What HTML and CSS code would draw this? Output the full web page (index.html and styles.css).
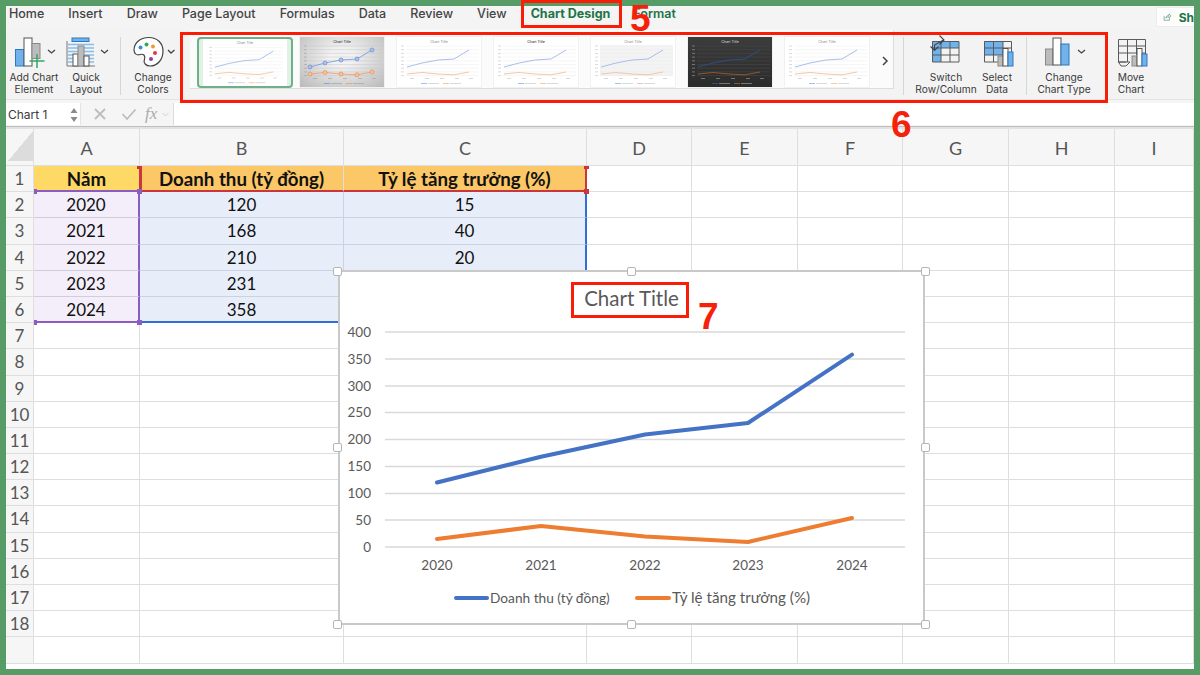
FILE: index.html
```html
<!DOCTYPE html>
<html lang="vi">
<head>
<meta charset="utf-8">
<title>Chart Design</title>
<link rel="stylesheet" href="styles.css">
</head>
<body>
<svg class="defs" width="0" height="0" aria-hidden="true">
  <symbol id="thumb" viewBox="0 0 84 50">
    <g class="t-grid">
      <path d="M9 9H82M9 12.7H82M9 16.4H82M9 20.1H82M9 23.8H82M9 27.5H82M9 31.2H82M9 34.9H82M9 38.6H82"/>
    </g>
    <path class="t-ticks" d="M4 9H7M4 12.7H7M4 16.4H7M4 20.1H7M4 23.8H7M4 27.5H7M4 31.2H7M4 34.9H7M4 38.6H7M13 41.5H17M28 41.5H32M43 41.5H47M58 41.5H62M72 41.5H76M31 46.5H42M53 46.5H64"/>
    <polyline class="t-blue" points="10,30 25,26 41,23 57,22 72,13"/>
    <polyline class="t-orange" points="10,37 25,35.5 41,37 57,37.8 72,35"/>
    <path class="t-blue" d="M24 46.5H30"/>
    <path class="t-orange" d="M46 46.5H52"/>
  </symbol>
</svg>

<div class="page">
  <div class="app">
    <nav class="tabs">
      <span class="tab">Home</span>
      <span class="tab">Insert</span>
      <span class="tab">Draw</span>
      <span class="tab">Page Layout</span>
      <span class="tab">Formulas</span>
      <span class="tab">Data</span>
      <span class="tab">Review</span>
      <span class="tab">View</span>
      <span class="tab tab-active">Chart Design</span>
      <span class="tab tab-format">Format</span>
      <span class="share">
        <svg width="16" height="14" viewBox="0 0 16 14"><path class="share-ic" d="M2 5V13H12V9M5 9C6 5 9 4 11 4V1.500L15 5L11 8.500V6.500C9 6.500 7 7 5 9Z"/></svg>
        <b>Sh</b>
      </span>
    </nav>

    <section class="ribbon">
      <div class="btn b-add">
        <svg class="ic" width="56" height="34" viewBox="6 34 56 34">
          <rect class="bar-blue" x="15.500" y="49.500" width="8.500" height="16.500"/>
          <rect class="bar-white" x="24" y="38" width="8" height="28"/>
          <rect class="bar-grey" x="32" y="43.500" width="8" height="15"/>
          <path class="plus" d="M37 54V68M29.500 61H44.500"/>
          <path class="chev" d="M48 50L51.500 53L55 50"/>
        </svg>
        <span class="lbl">Add Chart<br>Element</span>
      </div>
      <div class="btn b-quick">
        <svg class="ic" width="48" height="34" viewBox="62 34 48 34">
          <path class="stripes" d="M68 44.500H94M68 48H94M68 51.500H94M68 55H94M68 58.500H94M68 62H94"/>
          <path class="axis" d="M67 41V66H95"/>
          <rect class="bar-blue" x="72" y="38" width="17" height="3.500"/>
          <rect class="bar-white" x="73" y="54" width="5" height="12"/>
          <rect class="bar-grey" x="78" y="46" width="6" height="20"/>
          <rect class="bar-white" x="84" y="56" width="5" height="10"/>
          <path class="chev" d="M101 50L104.500 53L108 50"/>
        </svg>
        <span class="lbl">Quick<br>Layout</span>
      </div>
      <i class="sep s1"></i>
      <div class="btn b-colors">
        <svg class="ic" width="50" height="34" viewBox="128 34 50 34">
          <path class="palette" d="M149 37.500C139 37.500 134 44 134 50C134 54 137 55.500 140 54.500C144 53.500 145.500 56 144.500 59C143 63 146 66 150 66C158 66 163 59 163 51C163 43 157 37.500 149 37.500Z"/>
          <circle class="d-blue" cx="140.500" cy="47.500" r="2"/>
          <circle class="d-green" cx="146.500" cy="44.500" r="2"/>
          <circle class="d-orange" cx="153" cy="46.500" r="2"/>
          <circle class="d-red" cx="155" cy="53" r="2"/>
          <circle class="d-purple" cx="151" cy="59" r="2"/>
          <path class="chev" d="M168 50L171 53L174.500 50"/>
        </svg>
        <span class="lbl">Change<br>Colors</span>
      </div>

      <div class="gallery">
        <svg class="thumb thumb-sel" width="96" height="51" viewBox="-6 0 96 50">
          <use href="#thumb" width="84" height="50"/>
          <text class="t-title" x="42" y="5.500">Chart Title</text>
        </svg>
        <svg class="thumb thumb-2" width="84" height="50" viewBox="0 0 84 50">
          <use href="#thumb" width="84" height="50"/>
          <text class="t-title" x="42" y="5.500">Chart Title</text>
          <g class="t-mk-b"><circle cx="10" cy="30" r="2"/><circle cx="25" cy="26" r="2"/><circle cx="41" cy="23" r="2"/><circle cx="57" cy="22" r="2"/><circle cx="72" cy="13" r="2"/></g>
          <g class="t-mk-o"><circle cx="10" cy="37" r="2"/><circle cx="25" cy="35.500" r="2"/><circle cx="41" cy="37" r="2"/><circle cx="57" cy="37.800" r="2"/><circle cx="72" cy="35" r="2"/></g>
        </svg>
        <svg class="thumb thumb-plain" width="84" height="50" viewBox="0 0 84 50">
          <use href="#thumb" width="84" height="50"/>
          <text class="t-title" x="42" y="5.500">Chart Title</text>
        </svg>
        <svg class="thumb thumb-bold" width="84" height="50" viewBox="0 0 84 50">
          <use href="#thumb" width="84" height="50"/>
          <text class="t-title" x="42" y="5.500">Chart Title</text>
        </svg>
        <svg class="thumb thumb-hatch" width="84" height="50" viewBox="0 0 84 50">
          <rect class="hatch-bg" x="9" y="8" width="73" height="31"/>
          <use href="#thumb" width="84" height="50"/>
          <text class="t-title" x="42" y="5.500">Chart Title</text>
        </svg>
        <svg class="thumb thumb-dark" width="84" height="50" viewBox="0 0 84 50">
          <use href="#thumb" width="84" height="50"/>
          <text class="t-title" x="42" y="5.500">Chart Title</text>
        </svg>
        <svg class="thumb thumb-plain" width="84" height="50" viewBox="0 0 84 50">
          <use href="#thumb" width="84" height="50"/>
          <text class="t-title" x="42" y="5.500">Chart Title</text>
        </svg>
        <svg class="more" width="16" height="14" viewBox="0 0 16 14"><path d="M6 3L10 7L6 11"/></svg>
      </div>

      <i class="sep s2"></i>
      <div class="btn b-switch">
        <svg class="ic" width="64" height="34" viewBox="914 34 64 34">
          <rect class="fill-blue" x="932" y="41" width="27" height="7"/>
          <rect class="fill-blue" x="932" y="48" width="9" height="14"/>
          <path class="tbl" d="M932.500 41.500H959V62H932.500ZM932.500 48H959M932.500 55H959M941 41.500V62M950 41.500V62"/>
          <path class="arrow" d="M930.500 46.500L934.500 50.500L938.500 46.500M934.500 50V45L943.500 40M939.500 35.500L944 40L939.500 44.500"/>
        </svg>
        <span class="lbl">Switch<br>Row/Column</span>
      </div>
      <div class="btn b-select">
        <svg class="ic" width="38" height="34" viewBox="978 34 38 34">
          <rect class="fill-blue" x="984" y="41" width="19" height="14"/>
          <path class="tbl" d="M984.500 41.500H1011.500V62H984.500ZM984.500 48H1011.500M984.500 55H1011.500M993.500 41.500V62M1003 41.500V62"/>
          <rect class="bar-grey" x="998" y="56" width="5" height="10"/>
          <rect class="bar-white" x="1003" y="48.500" width="5" height="17.500"/>
          <rect class="bar-blue" x="1008" y="52" width="5" height="14"/>
        </svg>
        <span class="lbl">Select<br>Data</span>
      </div>
      <i class="sep s3"></i>
      <div class="btn b-type">
        <svg class="ic" width="72" height="34" viewBox="1028 34 72 34">
          <rect class="bar-grey" x="1045.500" y="49" width="7.500" height="16"/>
          <rect class="bar-white" x="1053" y="38" width="8" height="27"/>
          <rect class="bar-blue" x="1061" y="44" width="8" height="21"/>
          <path class="chev" d="M1078 50L1081.500 53L1085 50"/>
        </svg>
        <span class="lbl">Change<br>Chart Type</span>
      </div>
      <div class="btn b-move">
        <svg class="ic" width="44" height="34" viewBox="1109 34 44 34">
          <path class="tbl" d="M1118.500 39.500H1145.500V60M1118.500 39.500V62H1126M1118.500 46H1145.500M1118.500 53H1145.500M1127.500 39.500V62M1136.500 39.500V55"/>
          <path class="tbl" d="M1118.500 62H1130L1126 66H1121Z"/>
          <rect class="bar-grey" x="1132" y="56" width="5" height="10"/>
          <rect class="bar-white" x="1137" y="48.500" width="5" height="17.500"/>
          <rect class="bar-blue" x="1142" y="54" width="5" height="12"/>
        </svg>
        <span class="lbl">Move<br>Chart</span>
      </div>
    </section>

    <section class="formula">
      <div class="namebox">
        <span>Chart 1</span>
        <svg width="8" height="16" viewBox="0 0 8 16"><path class="spin" d="M4 1L7.500 6H0.500ZM4 15L0.500 10H7.500Z"/></svg>
      </div>
      <svg class="fx-x" width="14" height="14" viewBox="0 0 14 14"><path d="M2 2L12 12M12 2L2 12"/></svg>
      <svg class="fx-c" width="16" height="14" viewBox="0 0 16 14"><path d="M1.500 7L6 12L14.500 2.500"/></svg>
      <span class="fx">fx</span>
      <svg class="fx-v" width="7" height="5" viewBox="0 0 7 5"><path d="M0.500 1L3.500 4L6.500 1"/></svg>
      <div class="finput"></div>
    </section>

    <section class="sheet">
      <div class="row head">
        <div class="corner"><i></i></div>
        <div>A</div><div>B</div><div>C</div><div>D</div><div>E</div><div>F</div><div>G</div><div>H</div><div>I</div>
      </div>
      <div class="row">
        <div class="rh">1</div>
        <div class="hd gold">Năm</div><div class="hd amber red-l">Doanh thu (tỷ đồng)</div><div class="hd amber red-r">Tỷ lệ tăng trưởng (%)</div>
        <div></div><div></div><div></div><div></div><div></div><div></div>
      </div>
      <div class="row">
        <div class="rh">2</div>
        <div class="pur top">2020</div><div class="blu">120</div><div class="blu end">15</div>
        <div></div><div></div><div></div><div></div><div></div><div></div>
      </div>
      <div class="row">
        <div class="rh">3</div>
        <div class="pur">2021</div><div class="blu">168</div><div class="blu end">40</div>
        <div></div><div></div><div></div><div></div><div></div><div></div>
      </div>
      <div class="row">
        <div class="rh">4</div>
        <div class="pur">2022</div><div class="blu">210</div><div class="blu end">20</div>
        <div></div><div></div><div></div><div></div><div></div><div></div>
      </div>
      <div class="row">
        <div class="rh">5</div>
        <div class="pur">2023</div><div class="blu">231</div><div class="blu end">10</div>
        <div></div><div></div><div></div><div></div><div></div><div></div>
      </div>
      <div class="row">
        <div class="rh">6</div>
        <div class="pur bot">2024</div><div class="blu bot-b">358</div><div class="blu end bot-b">55</div>
        <div></div><div></div><div></div><div></div><div></div><div></div>
      </div>
      <div class="row"><div class="rh">7</div><div></div><div></div><div></div><div></div><div></div><div></div><div></div><div></div><div></div></div>
      <div class="row"><div class="rh">8</div><div></div><div></div><div></div><div></div><div></div><div></div><div></div><div></div><div></div></div>
      <div class="row"><div class="rh">9</div><div></div><div></div><div></div><div></div><div></div><div></div><div></div><div></div><div></div></div>
      <div class="row"><div class="rh">10</div><div></div><div></div><div></div><div></div><div></div><div></div><div></div><div></div><div></div></div>
      <div class="row"><div class="rh">11</div><div></div><div></div><div></div><div></div><div></div><div></div><div></div><div></div><div></div></div>
      <div class="row"><div class="rh">12</div><div></div><div></div><div></div><div></div><div></div><div></div><div></div><div></div><div></div></div>
      <div class="row"><div class="rh">13</div><div></div><div></div><div></div><div></div><div></div><div></div><div></div><div></div><div></div></div>
      <div class="row"><div class="rh">14</div><div></div><div></div><div></div><div></div><div></div><div></div><div></div><div></div><div></div></div>
      <div class="row"><div class="rh">15</div><div></div><div></div><div></div><div></div><div></div><div></div><div></div><div></div><div></div></div>
      <div class="row"><div class="rh">16</div><div></div><div></div><div></div><div></div><div></div><div></div><div></div><div></div><div></div></div>
      <div class="row"><div class="rh">17</div><div></div><div></div><div></div><div></div><div></div><div></div><div></div><div></div><div></div></div>
      <div class="row"><div class="rh">18</div><div></div><div></div><div></div><div></div><div></div><div></div><div></div><div></div><div></div></div>
      <div class="row"><div class="rh"></div><div></div><div></div><div></div><div></div><div></div><div></div><div></div><div></div><div></div></div>
    </section>
  </div>

  <i class="h h-pur h1"></i><i class="h h-pur h2"></i><i class="h h-pur h3"></i><i class="h h-pur h4"></i>
  <i class="h h-red h5"></i><i class="h h-red h6"></i><i class="h h-red h7"></i>

  <div class="chart">
    <svg width="587" height="355" viewBox="338 270 587 355">
      <path class="grid" d="M385 332H905M385 359H905M385 386H905M385 412.500H905M385 439.500H905M385 466.500H905M385 493.500H905M385 520H905M385 547H905"/>
      <g class="ylab">
        <text x="371" y="336.500">400</text><text x="371" y="363.500">350</text><text x="371" y="390.500">300</text>
        <text x="371" y="417">250</text><text x="371" y="444">200</text><text x="371" y="471">150</text>
        <text x="371" y="498">100</text><text x="371" y="525">50</text><text x="371" y="551.500">0</text>
      </g>
      <polyline class="s-blue" points="437,482.500 541,456.700 645,434.500 748,423 852,354.600"/>
      <polyline class="s-orange" points="437,539 541,526 645,536.500 748,542 852,518"/>
      <g class="xlab">
        <text x="437" y="570">2020</text><text x="541" y="570">2021</text><text x="645" y="570">2022</text>
        <text x="748" y="570">2023</text><text x="852" y="570">2024</text>
      </g>
      <path class="s-blue" d="M456 598H487"/>
      <path class="s-orange" d="M637 598H669"/>
      <text class="leg1" x="490" y="603">Doanh thu (tỷ đồng)</text>
      <text class="leg2" x="672" y="603">Tỷ lệ tăng trưởng (%)</text>
    </svg>
    <span class="chart-title">Chart Title</span>
  </div>
  <i class="ch c1"></i><i class="ch c2"></i><i class="ch c3"></i><i class="ch c4"></i><i class="ch c5"></i><i class="ch c6"></i><i class="ch c7"></i><i class="ch c8"></i>

  <i class="mark m-tab"></i>
  <i class="mark m-gal"></i>
  <i class="mark m-title"></i>
  <b class="num n5">5</b>
  <b class="num n6">6</b>
  <b class="num n7">7</b>
</div>
</body>
</html>
```

FILE: styles.css
```css
* { box-sizing: border-box; }
html, body { margin: 0; padding: 0; }
body { width: 1200px; height: 675px; overflow: hidden; background: #579c66; }
.defs { position: absolute; }
.page { position: relative; width: 1200px; height: 675px; padding: 6px; overflow: hidden; }
.app { height: 663px; display: flex; flex-direction: column; overflow: hidden; background: #fff; }

/* tabs */
.tabs {
  height: 24px; flex: none; display: flex; align-items: flex-start; gap: 24px;
  padding: 0 0 0 3px; background: #f4f4f4;
  font: 500 12.5px/15px Inter, "Liberation Sans", sans-serif; color: #444;
}
.tab { white-space: nowrap; }
.tab-active { color: #217346; font-weight: 700; }
.tab-format { color: #217346; font-weight: 600; margin-left: -1px; }
.share {
  margin-left: auto; width: 38px; height: 20px; margin-top: 1px;
  display: flex; align-items: center; gap: 7px; padding-left: 6px;
  background: #fdfdfd; border: 1px solid #ececec; border-right: 0; color: #217346;
  position: relative; z-index: 1; overflow: hidden;
}
.share b { font-weight: 700; font-size: 12px; }
.share-ic { fill: none; stroke: #3d8a5c; stroke-width: 1.1; }

/* ribbon */
.ribbon {
  height: 70px; flex: none; display: flex; align-items: stretch;
  background: #f3f3f3; border-bottom: 1px solid #e2e2e2;
}
.btn { flex: none; display: flex; flex-direction: column; align-items: center; padding-top: 4px; }
.ic { display: block; flex: none; }
.lbl {
  margin-top: 3px; text-align: center; white-space: nowrap; color: #3a3a3a;
  font: 400 10.2px/12px Inter, "Liberation Sans", sans-serif;
}
.b-add { width: 56px; }
.b-quick { width: 48px; }
.s1 { margin-left: 10px; }
.b-colors { width: 50px; margin-left: 7px; }
.gallery {
  flex: none; width: 704px; margin-left: 12px; height: 59px; padding: 7px 0 0 7px;
  display: flex; align-items: flex-start;
  background: #fbfbfb; border-bottom: 1px solid #dcdcdc; border-right: 1px solid #dcdcdc;
}
.s2 { margin-left: 9px; }
.b-switch { width: 64px; margin-left: 10px; }
.b-select { width: 38px; }
.s3 { margin-left: 10px; }
.b-type { width: 72px; margin-left: 1px; }
.b-move { width: 44px; margin-left: 9px; }
.sep { flex: none; width: 1px; height: 58px; margin-top: 7px; background: #d6d6d6; display: block; }

.chev { fill: none; stroke: #444; stroke-width: 1.3; }
.bar-blue { fill: #6fb2ec; stroke: #2f78bb; stroke-width: 1; }
.bar-white { fill: #fff; stroke: #555; stroke-width: 1; }
.bar-grey { fill: #bcbcbc; stroke: #8a8a8a; stroke-width: 1; }
.plus { fill: none; stroke: #2fa862; stroke-width: 1.5; }
.stripes { fill: none; stroke: #86bdec; stroke-width: 1.4; }
.axis { fill: none; stroke: #777; stroke-width: 1; }
.palette { fill: #fff; stroke: #444; stroke-width: 1.2; }
.d-blue { fill: #2f8fe0; }
.d-green { fill: #34a853; }
.d-orange { fill: #f39a2e; }
.d-red { fill: #e5393f; }
.d-purple { fill: #8e3ea8; }
.fill-blue { fill: #6fb2ec; }
.tbl { fill: none; stroke: #5a5a5a; stroke-width: 1; }
.arrow { fill: none; stroke: #444; stroke-width: 1.1; }

/* gallery thumbs */
.thumb {
  --b: #9db8ea; --o: #f5c09d; --t: #8c8c8c; --g: #ededed; --k: #cfcfcf;
  flex: none; display: block; margin-left: 13px; background: #fff; box-shadow: 0 0 0 1px #f1f1f1;
}
.thumb-sel {
  margin: 0; border: 2px solid #6eb088; border-radius: 4px; box-shadow: none;
  background: linear-gradient(90deg, #e2f0e6 0 4px, #fff 4px calc(100% - 4px), #e2f0e6 calc(100% - 4px));
}
.thumb-2 {
  --b: #7d9fdf; --o: #eea36f; --t: #222; --g: #c6c6c6; --k: #aaa; margin-left: 7px;
  background: radial-gradient(ellipse at 50% 40%, #f2f2f2 20%, #b9b9b9 100%);
}
.thumb-bold { --t: #222; }
.hatch-bg { fill: #f3f3f3; }
.thumb-dark {
  --b: #2f4f8f; --o: #9c5a2c; --t: #ddd; --g: #4d4d4d; --k: #888;
  background: linear-gradient(#3c3c3c, #2b2b2b);
}
.t-title { font: 400 3.6px Inter, "Liberation Sans", sans-serif; text-anchor: middle; fill: var(--t); }
.t-grid { fill: none; stroke: var(--g); stroke-width: .5; }
.t-ticks { fill: none; stroke: var(--k); stroke-width: .8; }
.t-blue { fill: none; stroke: var(--b); stroke-width: .9; }
.t-orange { fill: none; stroke: var(--o); stroke-width: .9; }
.t-mk-b circle { fill: #a9c1ec; stroke: #5f85cc; stroke-width: .6; }
.t-mk-o circle { fill: #f7c39e; stroke: #e8843e; stroke-width: .6; }
.more { flex: none; margin: 17px 0 0 auto; }
.more path { fill: none; stroke: #444; stroke-width: 1.5; }

/* formula bar */
.formula {
  height: 27px; flex: none; display: flex; align-items: center;
  background: #f5f5f5; border-bottom: 1px solid #bdbdbd; padding: 3px 0 1px;
}
.namebox {
  width: 75px; height: 22px; flex: none; display: flex; align-items: center; justify-content: space-between;
  padding: 1px 2px 0 2px; background: #fff; border-right: 1px solid #e4e4e4;
  font: 400 12px/16px Inter, "Liberation Sans", sans-serif; color: #3a3a3a;
}
.spin { fill: #8a8a8a; }
.fx-x { flex: none; margin-left: 12px; }
.fx-x path { fill: none; stroke: #bdbdbd; stroke-width: 1.8; }
.fx-c { flex: none; margin-left: 14px; }
.fx-c path { fill: none; stroke: #bdbdbd; stroke-width: 1.8; }
.fx { flex: none; margin-left: 8px; font: italic 400 17px/20px "Liberation Serif", serif; color: #ababab; }
.fx-v { flex: none; margin-left: 5px; }
.fx-v path { fill: none; stroke: #cfcfcf; stroke-width: 1; }
.finput { flex: 1; height: 22px; margin-left: 4px; background: #fff; border-left: 1px solid #dcdcdc; }

/* sheet */
.sheet { flex: 1; min-height: 0; overflow: hidden; background: #fff; border-top: 2px solid #e2e2e2; }
.row {
  display: grid; height: 26.2px; grid-template-rows: 26.2px;
  grid-template-columns: 28px 106px 204px 243px 105px 106px 105px 106px 106px 79px;
  font: 400 17px/26px Lato, "Open Sans", sans-serif; color: #111;
}
.row > div {
  border-right: 1px solid #dedede; border-bottom: 1px solid #dedede;
  text-align: center; white-space: nowrap; position: relative;
}
.row.head { height: 37px; grid-template-rows: 37px; background: #f6f6f6; color: #555; font-size: 18px; line-height: 36px; }
.head > div { background: #f6f6f6; padding-top: 1px; }
.row > .corner { padding: 2px; }
.corner i {
  display: block; width: 25px; height: 30px;
  background: linear-gradient(to bottom right, transparent 50%, #dcdcdc 50%);
}
.row > .rh { background: #f6f6f6; color: #555; font-size: 17px; }
.row > .hd { font-weight: 700; font-size: 18.7px; }
.row > .gold { background: #ffd966; border-bottom: 2px solid #8a5cc4; }
.row > .amber { background: #fcc766; border-bottom: 2px solid #c9373c; }
.row > .red-l { box-shadow: inset 2px 0 0 #c9373c; }
.gold { border-right: 1px solid #c9373c !important; }
.red-r { border-right: 2px solid #c9373c !important; }
.row > .pur { background: #f3eefa; border-right: 2px solid #8a5cc4; border-bottom-color: #cfcfdc; }
.row > .blu { background: #e8eef9; border-bottom-color: #cbd2e0; border-right-color: #cbd2e0; }
.row > .end { border-right: 2px solid #2f6fd6; }
.row > .bot { border-bottom: 2px solid #8a5cc4; }
.row > .bot-b { border-bottom: 2px solid #2f6fd6; }

/* selection handles */
.h { position: absolute; width: 5px; height: 5px; display: block; }
.h-pur { background: #8a5cc4; }
.h-red { background: #c9373c; }
.h1 { left: 34px; top: 189px; width: 3px; }
.h2 { left: 137px; top: 189px; }
.h3 { left: 34px; top: 320px; width: 3px; }
.h4 { left: 137px; top: 320px; }
.h5 { left: 137px; top: 166px; height: 3px; }
.h6 { left: 584px; top: 166px; height: 3px; }
.h7 { left: 584px; top: 189px; }

/* chart */
.chart {
  position: absolute; left: 338px; top: 270px; width: 587px; height: 355px;
  background: #fff; border: 2px solid #c9c9c9;
}
.chart svg { position: absolute; left: -2px; top: -2px; display: block; }
.chart-title {
  position: absolute; left: 0; right: 0; top: 13px; text-align: center;
  font: 400 20.5px/26px Lato, "Open Sans", sans-serif; color: #595959;
}
.grid { fill: none; stroke: #d9d9d9; stroke-width: 1.3; }
.ylab text, .xlab text { font: 400 13.5px Lato, "Open Sans", sans-serif; fill: #595959; }
.ylab text { text-anchor: end; }
.xlab text { text-anchor: middle; }
.s-blue { fill: none; stroke: #4472c4; stroke-width: 4; stroke-linecap: round; stroke-linejoin: round; }
.s-orange { fill: none; stroke: #ed7d31; stroke-width: 4; stroke-linecap: round; stroke-linejoin: round; }
.leg1 { font: 400 13.7px Lato, "Open Sans", sans-serif; fill: #595959; }
.leg2 { font: 400 15.2px Lato, "Open Sans", sans-serif; fill: #595959; }
.ch {
  position: absolute; display: block; width: 9px; height: 9px; margin: -4.5px 0 0 -4.5px;
  background: #fff; border: 1px solid #b5b5b5; border-radius: 2px;
}
.c1 { left: 337px; top: 271px; }
.c2 { left: 631px; top: 271px; }
.c3 { left: 925px; top: 271px; }
.c4 { left: 337px; top: 447px; }
.c5 { left: 925px; top: 447px; }
.c6 { left: 337px; top: 624px; }
.c7 { left: 631px; top: 624px; }
.c8 { left: 925px; top: 624px; }

/* annotations */
.mark { position: absolute; display: block; border: 3.5px solid #f91c06; }
.m-tab { left: 521px; top: 0; width: 101px; height: 28px; }
.m-gal { left: 180px; top: 32px; width: 928px; height: 71px; }
.m-title { left: 571px; top: 282px; width: 118px; height: 36px; }
.num { position: absolute; font: 700 37px/37px "Liberation Sans", sans-serif; color: #f5210a; }
.n5 { left: 630px; top: 0; }
.n6 { left: 891px; top: 106px; }
.n7 { left: 698px; top: 298px; }
```
